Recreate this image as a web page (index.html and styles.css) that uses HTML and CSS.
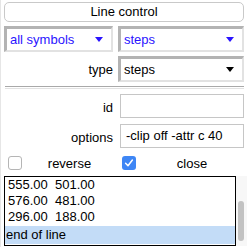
FILE: index.html
```html
<!DOCTYPE html>
<html>
<head>
<meta charset="utf-8">
<link rel="stylesheet" href="styles.css">
</head>
<body>
<div class="panel">
  <div class="title">Line control</div>
  <div class="pair">
    <div class="menu blue"><span>all symbols</span><span class="arrow"></span></div>
    <div class="menu blue"><span>steps</span><span class="arrow"></span></div>
  </div>
  <div class="pair">
    <div class="label">type</div>
    <div class="menu"><span>steps</span><span class="arrow"></span></div>
  </div>
  <div class="sep"></div>
  <div class="pair field">
    <div class="label">id</div>
    <div class="entry"></div>
  </div>
  <div class="pair field">
    <div class="label">options</div>
    <div class="entry">-clip off -attr c 40</div>
  </div>
  <div class="checks">
    <div class="check"><span class="box"></span><span class="cl">reverse</span></div>
    <div class="check"><span class="box on"><svg width="14" height="14" viewBox="0 0 14 14"><path d="M3.6 7.3 L6 9.7 L10.4 4" fill="none" stroke="#fff" stroke-width="1.5" stroke-linecap="round" stroke-linejoin="round"/></svg></span><span class="cl">close</span></div>
  </div>
  <div class="listwrap">
    <div class="list">
      <div class="item">555.00&nbsp; 501.00</div>
      <div class="item">576.00&nbsp; 481.00</div>
      <div class="item">296.00&nbsp; 188.00</div>
      <div class="item sel">end of line</div>
    </div>
    <div class="scroll"><div class="thumb"></div></div>
  </div>
</div>
</body>
</html>
```
FILE: styles.css
```css
html, body {
  margin: 0;
  padding: 0;
  background: #ffffff;
}
body {
  width: 247px;
  height: 247px;
  overflow: hidden;
  font-family: "Liberation Sans", Arial, sans-serif;
  font-size: 13px;
  color: #000;
  border-left: 1px solid #e6e6e6;
  box-sizing: border-box;
}
.panel {
  display: flex;
  flex-direction: column;
  padding: 2px 3px 0 3px;
}
.title {
  height: 18px;
  border: 1px solid #c9c9c9;
  border-radius: 5px;
  text-align: center;
  line-height: 18px;
  background: #fff;
}
.pair {
  display: grid;
  grid-template-columns: 109px 1fr;
  column-gap: 5px;
  margin-top: 4px;
}
.menu {
  height: 26px;
  box-sizing: border-box;
  border-top: 3px solid #b3b3b3;
  border-left: 3px solid #b3b3b3;
  border-right: 2px solid #e2e2e2;
  border-bottom: 2px solid #e2e2e2;
  display: flex;
  align-items: center;
  justify-content: space-between;
  padding: 0 8px 0 3px;
}
.blue { color: #2a14ff; }
.arrow {
  width: 0;
  height: 0;
  border-left: 4px solid transparent;
  border-right: 4px solid transparent;
  border-top: 5px solid currentColor;
}
.label {
  text-align: right;
  align-self: center;
}
.sep {
  margin-top: 4px;
  height: 1px;
  border-top: 1px solid #a9a9a9;
  border-bottom: 1px solid #e2e2e2;
  margin-left: 1px;
}
.field { margin-top: 5px; }
.field + .field { margin-top: 6px; }
.field .label { padding-top: 2px; }
.entry {
  height: 24px;
  box-sizing: border-box;
  border: 1px solid #c6c6c6;
  margin-left: 2px;
  padding: 0 5px;
  line-height: 22px;
}
.checks {
  display: grid;
  grid-template-columns: 109px 1fr;
  column-gap: 5px;
  margin-top: 6px;
  height: 18px;
}
.check {
  display: flex;
  align-items: center;
}
.box {
  width: 14px;
  height: 14px;
  box-sizing: border-box;
  border: 1px solid #b5b5b5;
  border-radius: 3px;
  margin-left: 4px;
  background: #fff;
  display: flex;
}
.box.on {
  border: none;
  background: #3e86f5;
}
.cl {
  flex: 1;
  text-align: center;
  padding-left: 4px;
}
.listwrap {
  display: flex;
  margin-top: 4px;
  height: 70px;
}
.list {
  flex: 0 0 232px;
  box-sizing: border-box;
  border: 1px solid #000;
  overflow: hidden;
}
.item {
  height: 16px;
  line-height: 16px;
  padding-left: 3px;
  white-space: nowrap;
}
.item.sel {
  background: #c3dcf7;
  margin-top: 1px;
  height: 18px;
  line-height: 17px;
  padding-left: 1px;
}
.scroll {
  flex: 1;
  background: #f7f7f7;
  position: relative;
  margin-right: -3px;
}
.thumb {
  position: absolute;
  left: 2px;
  width: 6px;
  top: 25px;
  height: 40px;
  background: #c2c2c2;
  border-radius: 3px;
}
```
